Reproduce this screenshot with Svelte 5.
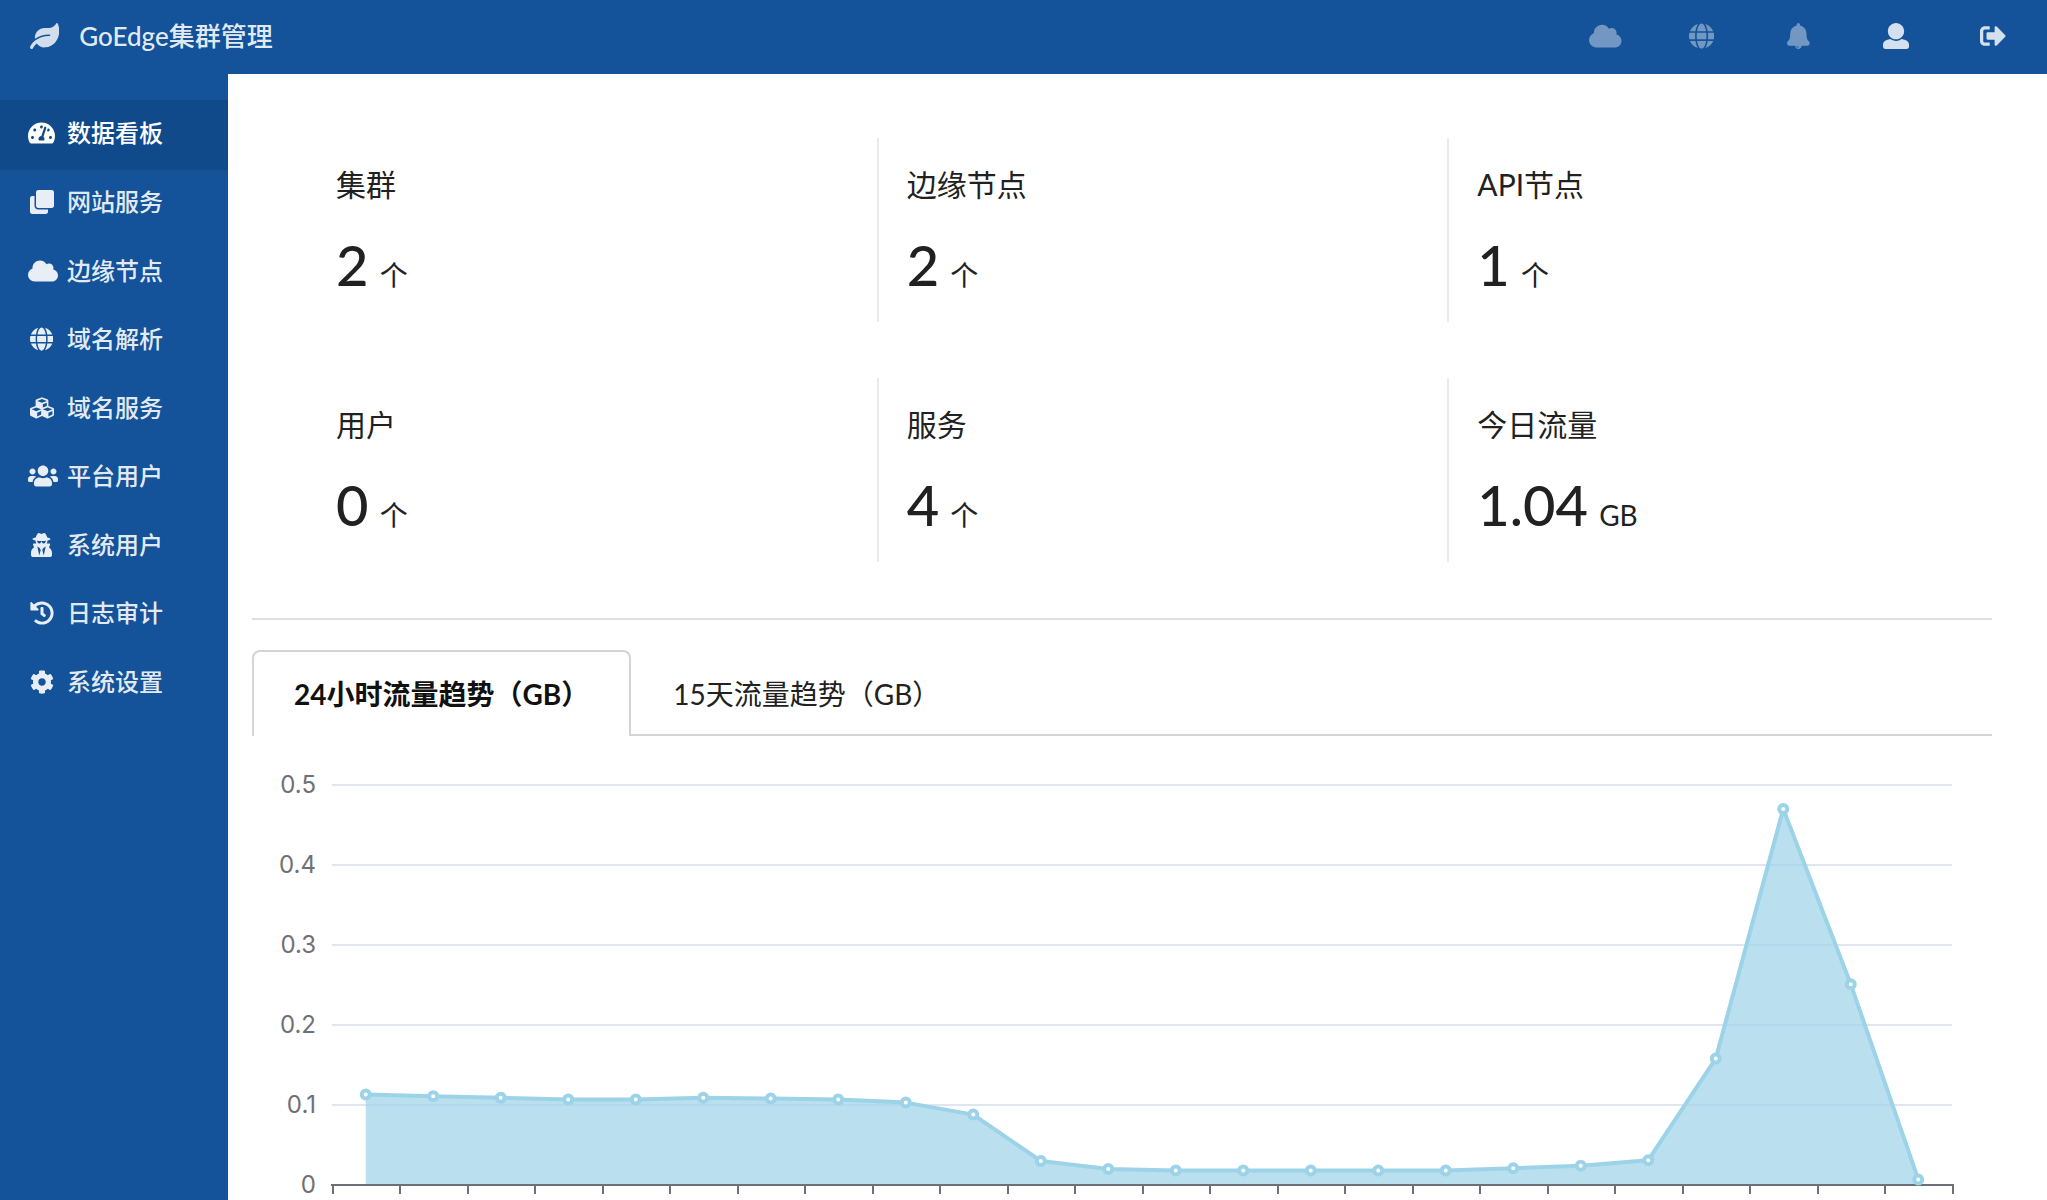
<script lang="ts">
	type IconShape = { width: number; d: string };

	const icons: Record<string, IconShape> = {
		leaf: { width: 576, d: 'M546.2 9.7c-5.6-12.5-21.6-13-28.3-1.2C486.9 62.4 431.4 96 368 96h-80C182 96 96 182 96 288c0 7 .8 13.7 1.5 20.5C161.3 262.8 253.4 224 384 224c8.8 0 16 7.2 16 16s-7.2 16-16 16C132.6 256 26 410.1 2.4 468c-6.6 16.3 1.2 34.9 17.5 41.6 16.4 6.8 35-1.1 41.8-17.3 1.5-3.6 20.9-47.9 71.9-90.6 32.4 43.9 94 85.8 174.9 77.2C465.5 467.5 576 326.7 576 154.3c0-50.2-10.8-102.2-29.8-144.6z' },
		dashboard: { width: 576, d: 'M288 32C128.94 32 0 160.94 0 320c0 52.8 14.25 102.26 39.06 144.8 5.61 9.62 16.3 15.2 27.44 15.2h443c11.14 0 21.83-5.58 27.44-15.2C561.75 422.26 576 372.8 576 320c0-159.06-128.94-288-288-288zm0 64c14.71 0 26.58 10.13 30.32 23.65-1.11 2.26-2.64 4.23-3.45 6.67l-9.22 27.67c-5.13 3.49-10.97 6.01-17.64 6.01-17.67 0-32-14.33-32-32S270.33 96 288 96zM96 384c-17.67 0-32-14.33-32-32s14.33-32 32-32 32 14.33 32 32-14.33 32-32 32zm48-160c-17.67 0-32-14.33-32-32s14.33-32 32-32 32 14.33 32 32-14.33 32-32 32zm246.77-72.41l-61.33 184C343.13 347.33 352 364.54 352 384c0 11.72-3.38 22.55-8.88 32H232.88c-5.5-9.45-8.88-20.28-8.88-32 0-33.94 26.5-61.43 59.9-63.59l61.34-184.01c4.17-12.56 17.73-19.45 30.36-15.17 12.57 4.19 19.35 17.79 15.17 30.36zm14.66 57.2l15.52-46.55c3.47-1.29 7.13-2.23 11.05-2.23 17.67 0 32 14.33 32 32s-14.33 32-32 32c-11.38-.01-20.89-6.28-26.57-15.22zM480 384c-17.67 0-32-14.33-32-32s14.33-32 32-32 32 14.33 32 32-14.33 32-32 32z' },
		clone: { width: 512, d: 'M464 0c26.51 0 48 21.49 48 48v288c0 26.51-21.49 48-48 48H176c-26.51 0-48-21.49-48-48V48c0-26.51 21.49-48 48-48h288M176 416c-44.112 0-80-35.888-80-80V128H48c-26.51 0-48 21.49-48 48v288c0 26.51 21.49 48 48 48h288c26.51 0 48-21.49 48-48v-48H176z' },
		cloud: { width: 640, d: 'M537.6 226.6c4.1-10.7 6.4-22.4 6.4-34.6 0-53-43-96-96-96-19.7 0-38.1 6-53.3 16.2C367 64.2 315.3 32 256 32c-88.4 0-160 71.6-160 160 0 2.7.1 5.4.2 8.1C40.2 219.8 0 273.2 0 336c0 79.5 64.5 144 144 144h368c70.7 0 128-57.3 128-128 0-61.9-44-113.6-102.4-125.4z' },
		globe: { width: 496, d: 'M336.5 160C322 70.7 287.8 8 248 8s-74 62.7-88.5 152h177zM152 256c0 22.2 1.2 43.5 3.3 64h185.3c2.1-20.5 3.3-41.8 3.3-64s-1.2-43.5-3.3-64H155.3c-2.1 20.5-3.3 41.8-3.3 64zm324.7-96c-28.6-67.9-86.5-120.4-158-141.6 24.4 33.8 41.2 84.7 50 141.6h108zM177.2 18.4C105.8 39.6 47.8 92.1 19.3 160h108c8.7-56.9 25.5-107.8 49.9-141.6zM487.4 192H372.7c2.1 21 3.3 42.5 3.3 64s-1.2 43-3.3 64h114.6c5.5-20.5 8.6-41.8 8.6-64s-3.1-43.5-8.5-64zM120 256c0-21.5 1.2-43 3.3-64H8.6C3.2 212.5 0 233.8 0 256s3.2 43.5 8.6 64h114.6c-2-21-3.2-42.5-3.2-64zm39.5 96c14.5 89.3 48.7 152 88.5 152s74-62.7 88.5-152h-177zm159.3 141.6c71.4-21.2 129.4-73.7 158-141.6h-108c-8.8 56.9-25.6 107.8-50 141.6zM19.3 352c28.6 67.9 86.5 120.4 158 141.6-24.4-33.8-41.2-84.7-50-141.6h-108z' },
		cubes: { width: 512, d: 'M488.6 250.2L392 214V105.5c0-15-9.3-28.4-23.4-33.7l-100-37.5c-8.1-3.1-17.1-3.1-25.3 0l-100 37.5c-14.1 5.3-23.4 18.7-23.4 33.7V214l-96.6 36.2C9.3 255.5 0 268.9 0 283.9V394c0 13.6 7.7 26.1 19.9 32.2l100 50c10.1 5.1 22.1 5.1 32.2 0l103.9-52 103.9 52c10.1 5.1 22.1 5.1 32.2 0l100-50c12.2-6.1 19.9-18.6 19.9-32.2V283.9c0-15-9.3-28.4-23.4-33.7zM358 214.8l-85 31.9v-68.2l85-37v73.3zM154 104.1l102-38.2 102 38.2v.6l-102 41.4-102-41.4v-.6zm84 291.1l-85 42.5v-79.1l85-38.8v75.4zm0-112l-102 41.4-102-41.4v-.6l102-38.2 102 38.2v.6zm240 112l-85 42.5v-79.1l85-38.8v75.4zm0-112l-102 41.4-102-41.4v-.6l102-38.2 102 38.2v.6z' },
		users: { width: 640, d: 'M96 224c35.3 0 64-28.7 64-64s-28.7-64-64-64-64 28.7-64 64 28.7 64 64 64zm448 0c35.3 0 64-28.7 64-64s-28.7-64-64-64-64 28.7-64 64 28.7 64 64 64zm32 32h-64c-17.6 0-33.5 7.1-45.1 18.6 40.3 22.1 68.9 62 75.1 109.4h66c17.7 0 32-14.3 32-32v-32c0-35.3-28.7-64-64-64zm-256 0c61.9 0 112-50.1 112-112S381.9 32 320 32 208 82.1 208 144s50.1 112 112 112zm76.8 32h-8.3c-20.8 10-43.9 16-68.5 16s-47.6-6-68.5-16h-8.3C179.6 288 128 339.6 128 403.2V432c0 26.5 21.5 48 48 48h288c26.5 0 48-21.5 48-48v-28.8c0-63.6-51.6-115.2-115.2-115.2zm-223.7-13.4C161.5 263.1 145.6 256 128 256H64c-35.3 0-64 28.7-64 64v32c0 17.7 14.3 32 32 32h65.9c6.3-47.4 34.9-87.3 75.2-109.4z' },
		secret: { width: 448, d: 'M383.9 308.3l23.9-62.6c4-10.5-3.7-21.7-15-21.7h-58.5c11-18.9 17.8-40.6 17.8-64v-.3c39.2-7.8 64-19.1 64-31.7 0-13.3-27.3-25.1-70.1-33-9.2-32.8-27-65.8-40.6-82.8-9.5-11.9-25.9-15.6-39.5-8.8l-27.6 13.8c-9 4.5-19.6 4.5-28.6 0L182.1 3.4c-13.6-6.8-30-3.1-39.5 8.8-13.5 17-31.4 50-40.6 82.8-42.7 7.9-70 19.7-70 33 0 12.6 24.8 23.9 64 31.7v.3c0 23.4 6.8 45.1 17.8 64H56.3c-11.5 0-19.2 11.7-14.7 22.3l25.8 60.2C27.3 329.8 0 372.7 0 422.4v44.8C0 491.9 20.1 512 44.8 512h358.4c24.7 0 44.8-20.1 44.8-44.8v-44.8c0-48.4-25.8-90.4-64.1-114.1zM176 480l-41.6-192 49.6 32 24 40-32 120zm96 0l-32-120 24-40 49.6-32L272 480zm41.7-298.5c-3.9 11.9-7 24.6-16.5 33.4-10.1 9.3-48 22.4-64-25-2.8-8.4-15.4-8.4-18.3 0-17 50.2-56 32.4-64 25-9.5-8.8-12.7-21.5-16.5-33.4-.8-2.5-6.3-5.7-6.3-5.8v-10.8c28.3 3.6 61 5.8 96 5.8s67.7-2.1 96-5.8v10.8c-.1.1-5.6 3.2-6.4 5.8z' },
		history: { width: 512, d: 'M504 255.531c.253 136.64-111.18 248.372-247.82 248.468-59.015.042-113.223-20.53-155.822-54.911-11.077-8.94-11.905-25.541-1.839-35.607l11.267-11.267c8.609-8.609 22.353-9.551 31.891-1.984C173.062 425.135 212.781 440 256 440c101.705 0 184-82.311 184-184 0-101.705-82.311-184-184-184-48.814 0-93.149 18.969-126.068 49.932l50.754 50.754c10.08 10.08 2.941 27.314-11.313 27.314H24c-8.837 0-16-7.163-16-16V38.627c0-14.254 17.234-21.393 27.314-11.314l49.372 49.372C129.209 34.136 189.552 8 256 8c136.81 0 247.747 110.78 248 247.531zm-180.912 78.784l9.823-12.63c8.138-10.463 6.253-25.542-4.21-33.679L288 256.349V152c0-13.255-10.745-24-24-24h-16c-13.255 0-24 10.745-24 24v135.651l65.409 50.874c10.463 8.137 25.541 6.253 33.679-4.21z' },
		setting: { width: 512, d: 'M487.4 315.7l-42.6-24.6c4.3-23.2 4.3-47 0-70.2l42.6-24.6c4.9-2.8 7.1-8.6 5.5-14-11.1-35.6-30-67.8-54.7-94.6-3.8-4.1-10-5.1-14.8-2.3L380.8 110c-17.9-15.4-38.5-27.3-60.8-35.1V25.8c0-5.6-3.9-10.5-9.4-11.7-36.7-8.2-74.3-7.8-109.2 0-5.5 1.2-9.4 6.1-9.4 11.7V75c-22.2 7.9-42.8 19.8-60.8 35.1L88.7 85.5c-4.9-2.8-11-1.9-14.8 2.3-24.7 26.7-43.6 58.9-54.7 94.6-1.7 5.4.6 11.2 5.5 14L67.3 221c-4.3 23.2-4.3 47 0 70.2l-42.6 24.6c-4.9 2.8-7.1 8.6-5.5 14 11.1 35.6 30 67.8 54.7 94.6 3.8 4.1 10 5.1 14.8 2.3l42.6-24.6c17.9 15.4 38.5 27.3 60.8 35.1v49.2c0 5.6 3.9 10.5 9.4 11.7 36.7 8.2 74.3 7.8 109.2 0 5.5-1.2 9.4-6.1 9.4-11.7v-49.2c22.2-7.9 42.8-19.8 60.8-35.1l42.6 24.6c4.9 2.8 11 1.9 14.8-2.3 24.7-26.7 43.6-58.9 54.7-94.6 1.5-5.5-.7-11.3-5.6-14.1zM256 336c-44.1 0-80-35.9-80-80s35.9-80 80-80 80 35.9 80 80-35.9 80-80 80z' },
		bell: { width: 448, d: 'M433.884 366.059C411.634 343.809 384 316.118 384 208c0-79.394-57.831-145.269-133.663-157.83A31.845 31.845 0 0 0 256 32c0-17.673-14.327-32-32-32s-32 14.327-32 32c0 6.75 2.095 13.008 5.663 18.17C121.831 62.731 64 128.606 64 208c0 108.118-27.643 135.809-49.893 158.059C-16.042 396.208 5.325 448 48.048 448H160c0 35.346 28.654 64 64 64s64-28.654 64-64h111.943c42.638 0 64.151-51.731 33.941-81.941zM224 472a8 8 0 0 1 0 16c-22.056 0-40-17.944-40-40h16c0 13.234 10.766 24 24 24z' },
		user: { width: 512, d: 'M256 0c88.366 0 160 71.634 160 160s-71.634 160-160 160S96 248.366 96 160 167.634 0 256 0zm183.283 333.821l-71.313-17.828c-74.923 53.89-165.738 41.864-223.94 0l-71.313 17.828C29.981 344.505 0 382.903 0 426.955V464c0 26.51 21.49 48 48 48h416c26.51 0 48-21.49 48-48v-37.045c0-44.052-29.981-82.45-72.717-93.134z' },
		signout: { width: 512, d: 'M497 273L329 441c-15 15-41 4.5-41-17v-96H152c-13.3 0-24-10.7-24-24v-96c0-13.3 10.7-24 24-24h136V88c0-21.4 25.9-32 41-17l168 168c9.3 9.4 9.3 24.6 0 34zM192 436v-40c0-6.6-5.4-12-12-12H96c-17.7 0-32-14.3-32-32V160c0-17.7 14.3-32 32-32h84c6.6 0 12-5.4 12-12V76c0-6.6-5.4-12-12-12H96c-53 0-96 43-96 96v192c0 53 43 96 96 96h84c6.6 0 12-5.4 12-12z' }
	};

	const topLinks = [
		{ icon: 'cloud', label: '集群', dim: true },
		{ icon: 'globe', label: '语言', dim: true },
		{ icon: 'bell', label: '消息', dim: true },
		{ icon: 'user', label: '个人资料', dim: false },
		{ icon: 'signout', label: '退出登录', dim: false }
	];

	const menu = [
		{ icon: 'dashboard', name: '数据看板' },
		{ icon: 'clone', name: '网站服务' },
		{ icon: 'cloud', name: '边缘节点' },
		{ icon: 'globe', name: '域名解析' },
		{ icon: 'cubes', name: '域名服务' },
		{ icon: 'users', name: '平台用户' },
		{ icon: 'secret', name: '系统用户' },
		{ icon: 'history', name: '日志审计' },
		{ icon: 'setting', name: '系统设置' }
	];

	const stats = [
		{ name: '集群', value: '2', unit: '个' },
		{ name: '边缘节点', value: '2', unit: '个' },
		{ name: 'API节点', value: '1', unit: '个' },
		{ name: '用户', value: '0', unit: '个' },
		{ name: '服务', value: '4', unit: '个' },
		{ name: '今日流量', value: '1.04', unit: 'GB' }
	];

	const tabs = ['24小时流量趋势（GB）', '15天流量趋势（GB）'];
	let activeTab = $state(0);

	const traffic = [
		0.113, 0.111, 0.109, 0.107, 0.107, 0.109, 0.108, 0.107, 0.103, 0.088, 0.03, 0.02,
		0.018, 0.018, 0.018, 0.018, 0.018, 0.021, 0.024, 0.031, 0.158, 0.47, 0.251, 0.007
	];
	const yLabels = ['0.5', '0.4', '0.3', '0.2', '0.1', '0'];

	// plot area inside the chart
	const left = 80;
	const top = 49;
	const rowHeight = 80;
	const bottom = top + rowHeight * 5;

	let chartWidth = $state(1740);
	let right = $derived(chartWidth - 40);
	let step = $derived((right - left) / traffic.length);
	let points = $derived(
		traffic.map((v, i) => ({ x: left + step * (i + 0.5), y: bottom - v * rowHeight * 10 }))
	);
	let line = $derived(points.map((p) => `${p.x},${p.y}`).join(' '));
	let area = $derived(`${points[0].x},${bottom} ${line} ${points[points.length - 1].x},${bottom}`);
</script>

{#snippet icon(name: string)}
	<svg class="icon" viewBox="0 0 {icons[name].width} 512" aria-hidden="true">
		<path d={icons[name].d} />
	</svg>
{/snippet}

<div class="page">
	<header class="top-bar">
		<a class="brand" href="#home">
			{@render icon('leaf')}
			<span class="label">GoEdge集群管理</span>
		</a>
		<nav class="top-links">
			{#each topLinks as link}
				<a href="#{link.icon}" class:dim={link.dim} aria-label={link.label}>
					<span class="icon-box">{@render icon(link.icon)}</span>
				</a>
			{/each}
		</nav>
	</header>

	<nav class="sidebar">
		{#each menu as item, i}
			<a href="#{item.icon}" class:active={i === 0}>
				<span class="icon-box">{@render icon(item.icon)}</span>
				<span class="label">{item.name}</span>
			</a>
		{/each}
	</nav>

	<main>
		<section class="stats">
			{#each stats as stat}
				<div class="stat">
					<h4>{stat.name}</h4>
					<div class="value"><span>{stat.value}</span> {stat.unit}</div>
				</div>
			{/each}
		</section>

		<hr />

		<div class="tabs" role="tablist">
			{#each tabs as tab, i}
				<button
					type="button"
					role="tab"
					aria-selected={activeTab === i}
					class:active={activeTab === i}
					onclick={() => (activeTab = i)}
				>
					{tab}
				</button>
			{/each}
		</div>

		<div class="chart" bind:clientWidth={chartWidth}>
			<svg width={chartWidth} height="464">
				{#each yLabels as label, i}
					<text x={left - 16} y={top + rowHeight * i + 8} text-anchor="end">{label}</text>
					{#if i < 5}
						<line class="grid" x1={left} x2={right} y1={top + rowHeight * i} y2={top + rowHeight * i} />
					{/if}
				{/each}
				<polygon class="area" points={area} />
				<line class="axis" x1={left - 1} x2={right + 2} y1={bottom} y2={bottom} />
				{#each { length: traffic.length + 1 } as _, i}
					<line
						class="axis"
						x1={Math.floor(left + step * i) + 1}
						x2={Math.floor(left + step * i) + 1}
						y1={bottom}
						y2={bottom + 9}
					/>
				{/each}
				<polyline class="trend" points={line} />
				{#each points as p}
					<circle cx={p.x} cy={p.y} r="4" />
				{/each}
			</svg>
		</div>
	</main>
</div>

<style>
	:global(body) {
		margin: 0;
		background: #fff;
	}

	.page {
		display: grid;
		grid-template-columns: 228px minmax(0, 1fr);
		grid-template-rows: 74px minmax(0, 1fr);
		height: 100vh;
		overflow: hidden;
		font-family: Lato, 'Noto Sans CJK SC', sans-serif;
		font-size: 28px;
		color: #212121;
	}

	a {
		text-decoration: none;
	}

	.icon {
		flex: none;
		height: 1em;
		fill: currentColor;
	}

	.icon-box {
		display: flex;
		justify-content: safe center;
		flex: none;
	}

	.label {
		padding-bottom: 3px;
		font-weight: 500;
	}

	.top-bar {
		grid-column: 1 / -1;
		display: flex;
		justify-content: space-between;
		box-sizing: border-box;
		padding-bottom: 2px;
		background: #14539a;
		font-size: 26px;
	}

	.brand {
		display: flex;
		align-items: center;
		gap: 20px;
		padding-left: 30px;
		color: rgba(255, 255, 255, 0.9);
	}

	.brand .icon {
		opacity: 0.9;
	}

	.top-links {
		display: flex;
		padding-right: 6px;
	}

	.top-links a {
		display: flex;
		align-items: center;
		padding: 0 33px;
		color: rgba(255, 255, 255, 0.82);
	}

	.top-links a.dim {
		color: rgba(255, 255, 255, 0.4);
	}

	.top-links .icon-box {
		width: 31px;
	}

	.sidebar {
		display: grid;
		grid-template-rows: 70px repeat(8, 1fr);
		box-sizing: border-box;
		height: 100%;
		padding-top: 26px;
		padding-bottom: calc(100vh - 718px);
		background: #14539a;
		font-size: 24px;
	}

	.sidebar a {
		display: flex;
		align-items: center;
		gap: 12px;
		padding-left: 28px;
		padding-bottom: 4px;
		color: rgba(255, 255, 255, 0.9);
	}

	.sidebar a.active {
		background: rgba(0, 0, 0, 0.1);
		color: #fff;
	}

	.sidebar .icon-box {
		width: 27px;
	}

	main {
		padding: 36px 55px 0 24px;
		overflow: hidden;
	}

	.stats {
		display: grid;
		grid-template-columns: repeat(3, 1fr);
		margin-left: 56px;
		margin-right: -28px;
	}

	.stat {
		height: 184px;
		margin: 28px 0;
		padding: 24px 28px 0;
		box-sizing: border-box;
		border-right: 2px solid #ebebeb;
	}

	.stat:nth-child(3n) {
		border-right: none;
	}

	.stat h4 {
		margin: 0;
		font-size: 30px;
		font-weight: 400;
		line-height: 44px;
	}

	.value {
		margin-top: 23px;
		line-height: 72px;
	}

	.value span {
		margin-right: 4px;
		font-size: 56px;
		font-weight: 500;
	}

	hr {
		height: 2px;
		margin: 29px 0 30px;
		margin-top: 28px;
		border: none;
		background: #dededf;
	}

	.tabs {
		display: flex;
		height: 86px;
		box-shadow: inset 0 -2px #d4d4d5;
	}

	.tabs button {
		padding: 0 40px 3px;
		border: 2px solid transparent;
		border-bottom: none;
		border-radius: 8px 8px 0 0;
		background: none;
		font: inherit;
		color: inherit;
		cursor: pointer;
	}

	.tabs button.active {
		border-color: #d4d4d5;
		background: #fff;
		font-weight: 700;
		color: #111;
	}

	.chart svg {
		display: block;
	}

	.chart text {
		font-family: Inter, sans-serif;
		font-size: 24px;
		fill: #6e7079;
	}

	.grid {
		stroke: #e0e6f1;
		stroke-width: 2;
	}

	.axis {
		stroke: #6e7079;
		stroke-width: 2;
	}

	.area {
		fill: #9cd3e8;
		fill-opacity: 0.7;
	}

	.trend {
		fill: none;
		stroke: #9cd3e8;
		stroke-width: 4;
		stroke-linejoin: bevel;
	}

	circle {
		fill: #fff;
		stroke: #9cd3e8;
		stroke-width: 4;
	}
</style>
